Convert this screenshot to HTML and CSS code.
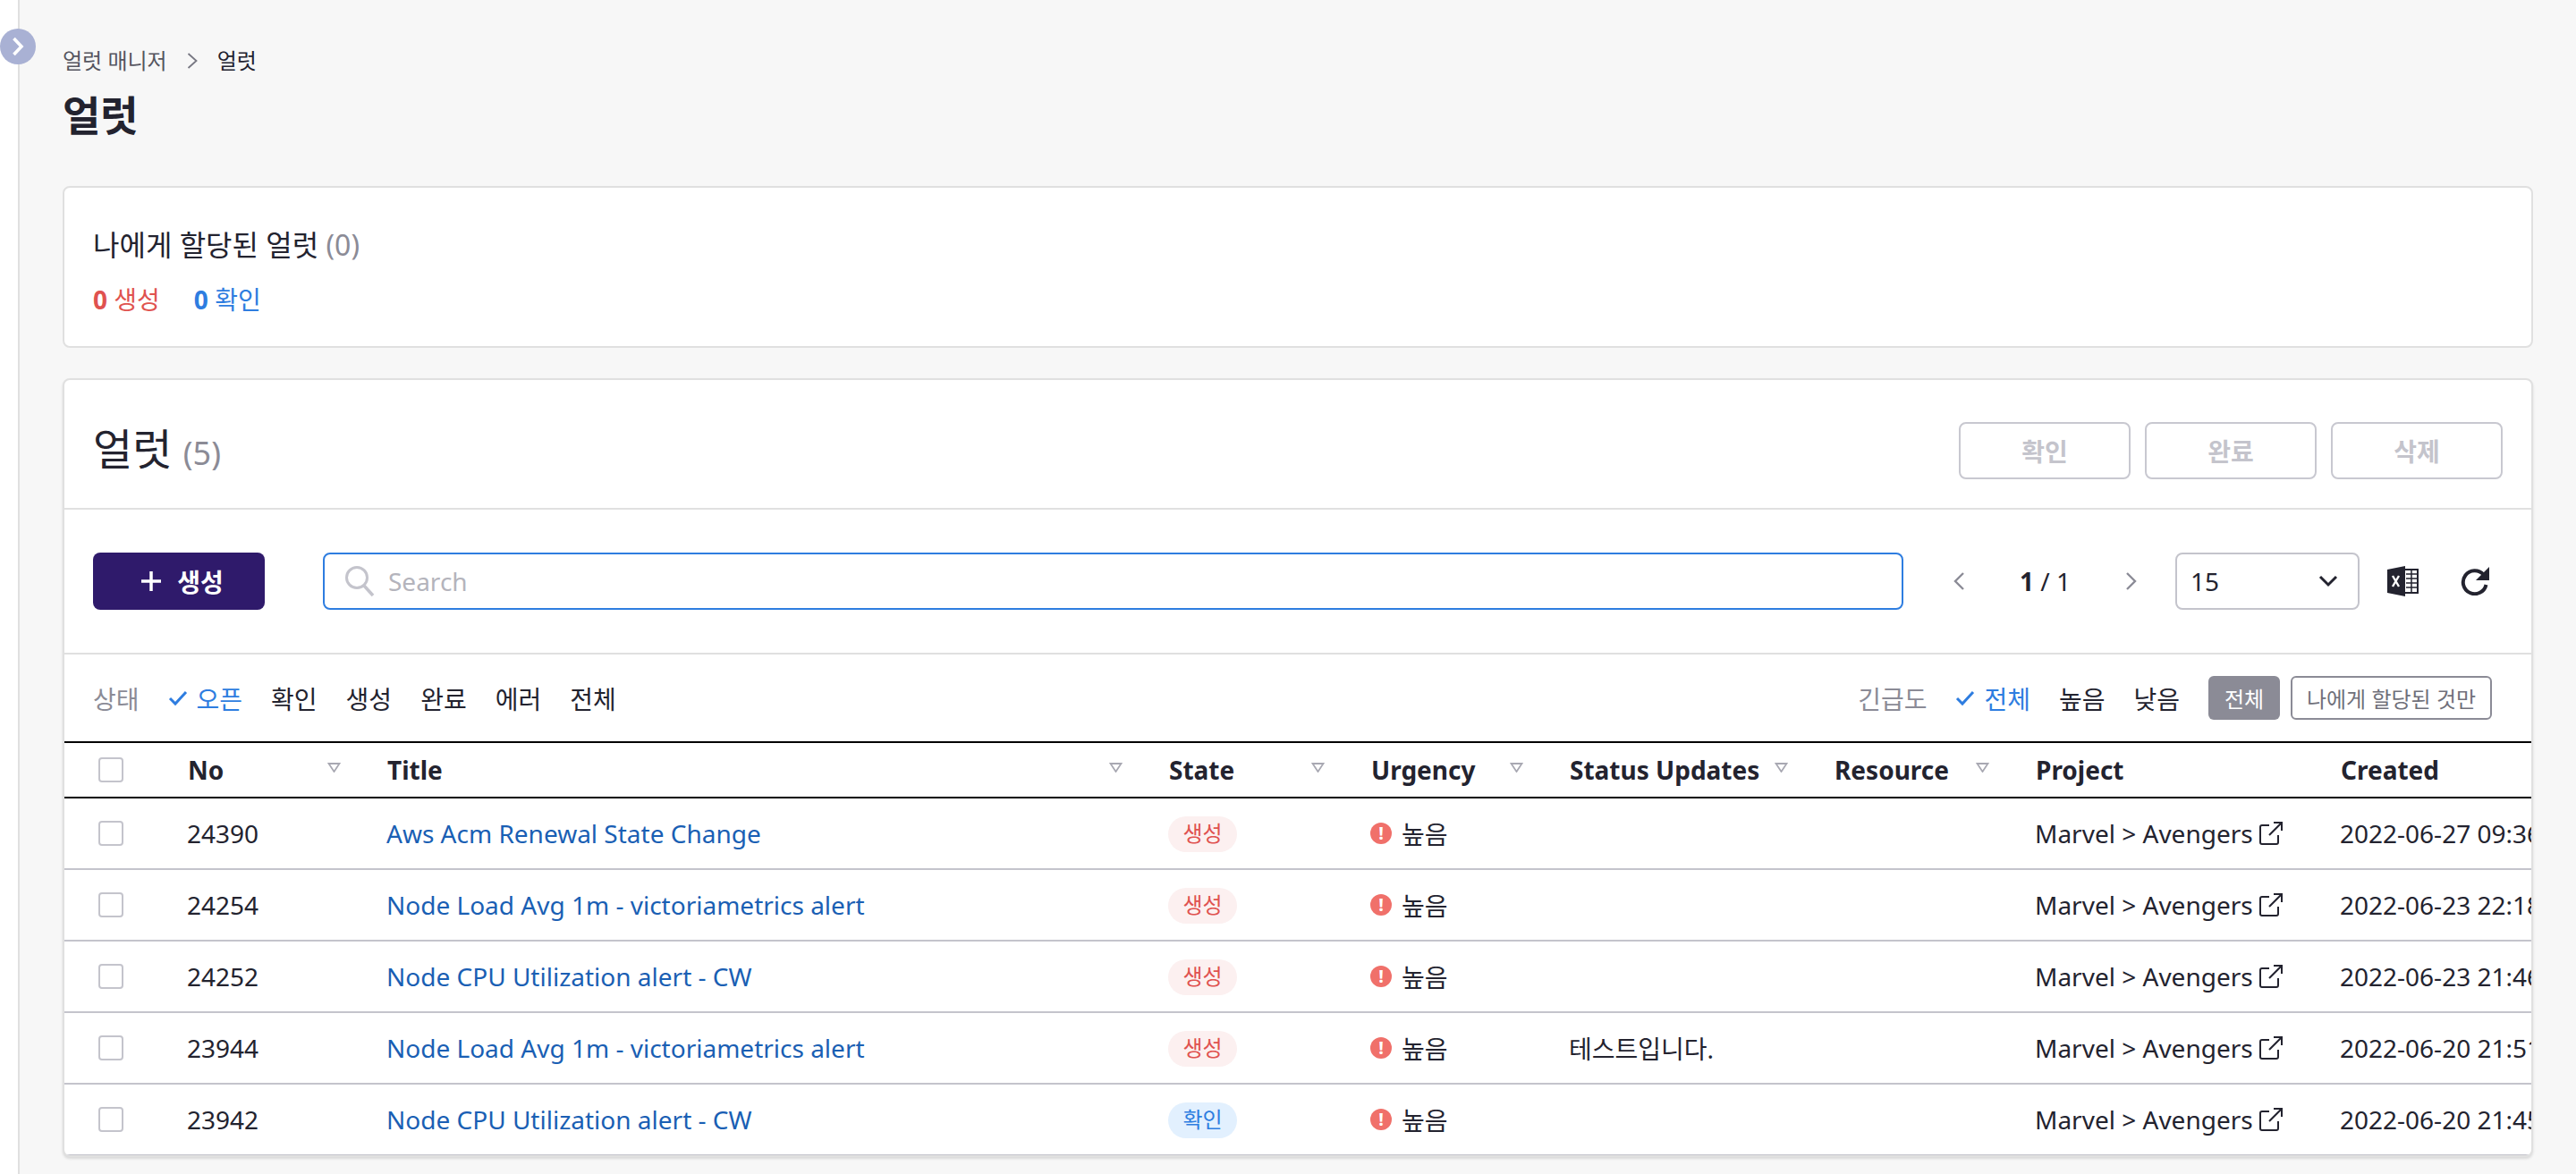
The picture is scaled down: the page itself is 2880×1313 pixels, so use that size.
FILE: index.html
```html
<!DOCTYPE html>
<html lang="ko">
<head>
    <meta charset="UTF-8">
    <title>얼럿</title>
    <link rel="stylesheet" href="styles.css">
</head>
<body>
    <div class="sidebar"></div>
    <button class="side-toggle">
        <svg width="16" height="22" viewBox="0 0 16 22"><path d="M3.5 2l8.5 9-8.5 9" fill="none" stroke="#fff" stroke-width="3.6"/></svg>
    </button>

    <div class="main">
        <div class="breadcrumb">
            <span>얼럿 매니저</span>
            <svg class="crumb-sep" width="12" height="18" viewBox="0 0 12 18"><path d="M1.5 1l9 8-9 8" fill="none" stroke="#777782" stroke-width="1.8"/></svg>
            <span class="crumb-current">얼럿</span>
        </div>
        <h1 class="page-title">얼럿</h1>

        <div class="card my-alerts">
            <div class="my-title">나에게 할당된 얼럿 <span class="count">(0)</span></div>
            <div class="my-counts">
                <span class="red"><b>0</b> 생성</span>
                <span class="blue"><b>0</b> 확인</span>
            </div>
        </div>

        <div class="card alert-list">
            <div class="list-head">
                <div class="list-title">얼럿 <span class="count">(5)</span></div>
                <div class="head-btns">
                    <button class="btn-off">확인</button>
                    <button class="btn-off">완료</button>
                    <button class="btn-off">삭제</button>
                </div>
            </div>

            <div class="toolbar">
                <button class="btn-create">
                    <svg width="26" height="26" viewBox="0 0 26 26"><path d="M13 2v22M2 13h22" stroke="#fff" stroke-width="3.5" fill="none"/></svg>
                    생성
                </button>
                <div class="search">
                    <svg width="34" height="36" viewBox="0 0 34 36"><circle cx="14" cy="14" r="11.5" fill="none" stroke="#c4c4cc" stroke-width="3"/><path d="M22 23l10 11" stroke="#c4c4cc" stroke-width="3.5" fill="none"/></svg>
                    <span class="placeholder">Search</span>
                </div>
                <div class="pager">
                    <svg width="14" height="22" viewBox="0 0 14 22"><path d="M12 2L3 11l9 9" fill="none" stroke="#8b8b96" stroke-width="2.4"/></svg>
                    <span class="page-num"><b>1</b> / 1</span>
                    <svg width="14" height="22" viewBox="0 0 14 22"><path d="M2 2l9 9-9 9" fill="none" stroke="#8b8b96" stroke-width="2.4"/></svg>
                </div>
                <div class="page-size">
                    <span>15</span>
                    <svg width="22" height="14" viewBox="0 0 22 14"><path d="M2 2l9 9 9-9" fill="none" stroke="#23232f" stroke-width="3"/></svg>
                </div>
                <svg class="excel" width="35" height="34" viewBox="0 0 35 34">
                    <path d="M0 4L20 0v34L0 30z" fill="#23232f"/>
                    <path d="M6 11l7 12M13 11L6 23" stroke="#fff" stroke-width="2.4" fill="none"/>
                    <path d="M20 4h14v26H20" fill="none" stroke="#23232f" stroke-width="2"/>
                    <path d="M27 4v26M21 9h13M21 14h13M21 19h13M21 24h13" stroke="#23232f" stroke-width="1.5" fill="none"/>
                </svg>
                <svg class="refresh" width="32" height="32" viewBox="0 0 32 32">
                    <path d="M25.5 8.5A13 13 0 1 0 28.5 20" fill="none" stroke="#23232f" stroke-width="4"/>
                    <path d="M32 0v15H17z" fill="#23232f"/>
                </svg>
            </div>

            <div class="filters">
                <div class="filter-group">
                    <span class="filter-label">상태</span>
                    <span class="filter on"><svg width="22" height="18" viewBox="0 0 22 18"><path d="M2 9l6 6L20 2" fill="none" stroke="#2e7de0" stroke-width="3"/></svg>오픈</span>
                    <span class="filter">확인</span>
                    <span class="filter">생성</span>
                    <span class="filter">완료</span>
                    <span class="filter">에러</span>
                    <span class="filter">전체</span>
                </div>
                <div class="filter-group">
                    <span class="filter-label">긴급도</span>
                    <span class="filter on"><svg width="22" height="18" viewBox="0 0 22 18"><path d="M2 9l6 6L20 2" fill="none" stroke="#2e7de0" stroke-width="3"/></svg>전체</span>
                    <span class="filter">높음</span>
                    <span class="filter">낮음</span>
                    <div class="assign-btns">
                        <button class="btn-all">전체</button>
                        <button class="btn-mine">나에게 할당된 것만</button>
                    </div>
                </div>
            </div>

            <div class="table-wrap">
                <table class="alert-table">
                    <colgroup>
                        <col class="c-check"><col class="c-no"><col class="c-title"><col class="c-state"><col class="c-urgency"><col class="c-status"><col class="c-resource"><col class="c-project"><col class="c-created">
                    </colgroup>
                    <thead>
                        <tr>
                            <th class="check-cell"><span class="checkbox"></span></th>
                            <th><div class="th-in">No<svg class="sort" width="15" height="11" viewBox="0 0 15 11"><path d="M1.5 1h12L7.5 10z" fill="none" stroke="#a8a8b2" stroke-width="1.8"/></svg></div></th>
                            <th><div class="th-in">Title<svg class="sort" width="15" height="11" viewBox="0 0 15 11"><path d="M1.5 1h12L7.5 10z" fill="none" stroke="#a8a8b2" stroke-width="1.8"/></svg></div></th>
                            <th><div class="th-in">State<svg class="sort" width="15" height="11" viewBox="0 0 15 11"><path d="M1.5 1h12L7.5 10z" fill="none" stroke="#a8a8b2" stroke-width="1.8"/></svg></div></th>
                            <th><div class="th-in">Urgency<svg class="sort" width="15" height="11" viewBox="0 0 15 11"><path d="M1.5 1h12L7.5 10z" fill="none" stroke="#a8a8b2" stroke-width="1.8"/></svg></div></th>
                            <th><div class="th-in">Status Updates<svg class="sort" width="15" height="11" viewBox="0 0 15 11"><path d="M1.5 1h12L7.5 10z" fill="none" stroke="#a8a8b2" stroke-width="1.8"/></svg></div></th>
                            <th><div class="th-in">Resource<svg class="sort" width="15" height="11" viewBox="0 0 15 11"><path d="M1.5 1h12L7.5 10z" fill="none" stroke="#a8a8b2" stroke-width="1.8"/></svg></div></th>
                            <th><div class="th-in">Project</div></th>
                            <th><div class="th-in">Created</div></th>
                        </tr>
                    </thead>
                    <tbody>
                        <tr>
                            <td class="check-cell"><span class="checkbox"></span></td>
                            <td>24390</td>
                            <td><a class="alert-link">Aws Acm Renewal State Change</a></td>
                            <td><span class="badge badge-new">생성</span></td>
                            <td><span class="urgency"><span class="urg-dot">!</span>높음</span></td>
                            <td></td>
                            <td></td>
                            <td><span class="project">Marvel &gt; Avengers<svg width="26" height="26" viewBox="0 0 26 26"><path d="M11 4H3a2 2 0 0 0-2 2v17a2 2 0 0 0 2 2h16a2 2 0 0 0 2-2v-8M11 15L25 1M16 1h9v9" fill="none" stroke="#23232f" stroke-width="2"/></svg></span></td>
                            <td>2022-06-27 09:36:12</td>
                        </tr>
                        <tr>
                            <td class="check-cell"><span class="checkbox"></span></td>
                            <td>24254</td>
                            <td><a class="alert-link">Node Load Avg 1m - victoriametrics alert</a></td>
                            <td><span class="badge badge-new">생성</span></td>
                            <td><span class="urgency"><span class="urg-dot">!</span>높음</span></td>
                            <td></td>
                            <td></td>
                            <td><span class="project">Marvel &gt; Avengers<svg width="26" height="26" viewBox="0 0 26 26"><path d="M11 4H3a2 2 0 0 0-2 2v17a2 2 0 0 0 2 2h16a2 2 0 0 0 2-2v-8M11 15L25 1M16 1h9v9" fill="none" stroke="#23232f" stroke-width="2"/></svg></span></td>
                            <td>2022-06-23 22:18:40</td>
                        </tr>
                        <tr>
                            <td class="check-cell"><span class="checkbox"></span></td>
                            <td>24252</td>
                            <td><a class="alert-link">Node CPU Utilization alert - CW</a></td>
                            <td><span class="badge badge-new">생성</span></td>
                            <td><span class="urgency"><span class="urg-dot">!</span>높음</span></td>
                            <td></td>
                            <td></td>
                            <td><span class="project">Marvel &gt; Avengers<svg width="26" height="26" viewBox="0 0 26 26"><path d="M11 4H3a2 2 0 0 0-2 2v17a2 2 0 0 0 2 2h16a2 2 0 0 0 2-2v-8M11 15L25 1M16 1h9v9" fill="none" stroke="#23232f" stroke-width="2"/></svg></span></td>
                            <td>2022-06-23 21:46:05</td>
                        </tr>
                        <tr>
                            <td class="check-cell"><span class="checkbox"></span></td>
                            <td>23944</td>
                            <td><a class="alert-link">Node Load Avg 1m - victoriametrics alert</a></td>
                            <td><span class="badge badge-new">생성</span></td>
                            <td><span class="urgency"><span class="urg-dot">!</span>높음</span></td>
                            <td>테스트입니다.</td>
                            <td></td>
                            <td><span class="project">Marvel &gt; Avengers<svg width="26" height="26" viewBox="0 0 26 26"><path d="M11 4H3a2 2 0 0 0-2 2v17a2 2 0 0 0 2 2h16a2 2 0 0 0 2-2v-8M11 15L25 1M16 1h9v9" fill="none" stroke="#23232f" stroke-width="2"/></svg></span></td>
                            <td>2022-06-20 21:51:33</td>
                        </tr>
                        <tr>
                            <td class="check-cell"><span class="checkbox"></span></td>
                            <td>23942</td>
                            <td><a class="alert-link">Node CPU Utilization alert - CW</a></td>
                            <td><span class="badge badge-ack">확인</span></td>
                            <td><span class="urgency"><span class="urg-dot">!</span>높음</span></td>
                            <td></td>
                            <td></td>
                            <td><span class="project">Marvel &gt; Avengers<svg width="26" height="26" viewBox="0 0 26 26"><path d="M11 4H3a2 2 0 0 0-2 2v17a2 2 0 0 0 2 2h16a2 2 0 0 0 2-2v-8M11 15L25 1M16 1h9v9" fill="none" stroke="#23232f" stroke-width="2"/></svg></span></td>
                            <td>2022-06-20 21:45:18</td>
                        </tr>
                    </tbody>
                </table>
            </div>
        </div>
    </div>
</body>
</html>
```

FILE: styles.css
```css
* {
    box-sizing: border-box;
}

html, body {
    height: 100%;
}

body {
    margin: 0;
    display: flex;
    height: 1313px;
    overflow: hidden;
    background: #f7f7f7;
    color: #23232f;
    font-family: "Noto Sans", "Noto Sans CJK KR", sans-serif;
    font-size: 28px;
}

button {
    font-family: inherit;
    cursor: pointer;
}

.sidebar {
    width: 22px;
    flex: none;
    background: #fff;
    border-right: 2px solid #e0e0e0;
}

.side-toggle {
    position: absolute;
    left: 0;
    top: 32px;
    width: 40px;
    height: 40px;
    padding: 0;
    border: none;
    border-radius: 50%;
    background: #a9b1d4;
    display: flex;
    align-items: center;
    justify-content: center;
}

.main {
    flex: 1;
    min-width: 0;
    padding: 50px 48px 0;
}

/* 상단 */
.breadcrumb {
    display: flex;
    align-items: center;
    height: 36px;
    font-size: 24px;
    line-height: 36px;
    color: #55555f;
}

.crumb-sep {
    margin: 0 22px;
}

.crumb-current {
    color: #23232f;
}

.page-title {
    margin: 10px 0 0;
    height: 64px;
    font-size: 46px;
    line-height: 64px;
    font-weight: 700;
}

.card {
    background: #fff;
    border: 2px solid #e0e0e0;
    border-radius: 8px;
}

.my-alerts {
    height: 181px;
    margin-top: 48px;
    padding: 41px 32px 0;
}

.my-title {
    height: 46px;
    font-size: 32px;
    line-height: 46px;
}

.count {
    color: #8b8b96;
}

.my-counts {
    display: flex;
    gap: 38px;
    margin-top: 20px;
    font-size: 28px;
    line-height: 36px;
}

.my-counts b {
    font-weight: 700;
}

.red {
    color: #e0524f;
}

.blue {
    color: #2e7de0;
}

/* 얼럿 목록 */
.alert-list {
    height: 871px;
    margin-top: 34px;
    overflow: hidden;
    box-shadow: 0 2px 3px rgba(0, 0, 0, 0.12);
}

.list-head {
    height: 145px;
    padding: 15px 32px 0;
    display: flex;
    align-items: center;
    justify-content: space-between;
    border-bottom: 2px solid #e0e0e0;
}

.list-title {
    font-size: 48px;
    line-height: 64px;
}

.list-title .count {
    font-size: 36px;
}

.head-btns {
    display: flex;
    gap: 16px;
}

.btn-off {
    width: 192px;
    height: 64px;
    background: #fff;
    border: 2px solid #c8c8d0;
    border-radius: 8px;
    color: #c4c4cc;
    font-size: 28px;
    font-weight: 700;
}

.toolbar {
    height: 162px;
    padding: 0 47px 0 32px;
    display: flex;
    align-items: center;
    border-bottom: 2px solid #e0e0e0;
}

.btn-create {
    width: 192px;
    height: 64px;
    flex: none;
    display: flex;
    align-items: center;
    justify-content: center;
    gap: 16px;
    padding: 0 0 0 6px;
    background: #2f1a6b;
    border: none;
    border-radius: 8px;
    color: #fff;
    font-size: 28px;
    font-weight: 700;
}

.search {
    flex: 1;
    height: 64px;
    margin-left: 65px;
    padding-left: 22px;
    display: flex;
    align-items: center;
    gap: 15px;
    border: 2px solid #2e7de0;
    border-radius: 8px;
}

.placeholder {
    color: #b4b4bc;
}

.pager {
    width: 207px;
    margin-left: 55px;
    flex: none;
    display: flex;
    align-items: center;
    justify-content: space-between;
}

.page-num b {
    font-weight: 700;
}

.page-size {
    width: 206px;
    height: 64px;
    flex: none;
    margin-left: 42px;
    padding: 0 22px 0 15px;
    display: flex;
    align-items: center;
    justify-content: space-between;
    border: 2px solid #c4c4cc;
    border-radius: 8px;
}

.excel {
    flex: none;
    margin-left: 31px;
}

.refresh {
    flex: none;
    margin-left: 47px;
}

.filters {
    height: 97px;
    padding: 0 44px 0 32px;
    display: flex;
    align-items: center;
    justify-content: space-between;
}

.filter-group {
    display: flex;
    align-items: center;
    gap: 32px;
}

.filter-label {
    color: #8b8b96;
}

.filter {
    display: flex;
    align-items: center;
    gap: 10px;
}

.filter.on {
    color: #2e7de0;
}

.assign-btns {
    display: flex;
    gap: 12px;
}

.assign-btns button {
    height: 49px;
    padding: 0;
    border-radius: 6px;
    font-size: 24px;
}

.btn-all {
    width: 80px;
    background: #8b8b96;
    border: none;
    color: #fff;
}

.btn-mine {
    width: 225px;
    background: #fff;
    border: 2px solid #8b8b96;
    color: #70707a;
}

/* 테이블 */
.table-wrap {
    overflow: hidden;
}

.alert-table {
    width: 2828px;
    table-layout: fixed;
    border-collapse: separate;
    border-spacing: 0;
}

.c-check { width: 121px; }
.c-no { width: 223px; }
.c-title { width: 874px; }
.c-state { width: 226px; }
.c-urgency { width: 222px; }
.c-status { width: 296px; }
.c-resource { width: 225px; }
.c-project { width: 341px; }
.c-created { width: 300px; }

th {
    height: 64px;
    padding: 0 35px 0 17px;
    border-top: 2px solid #000;
    border-bottom: 2px solid #000;
    text-align: left;
    font-weight: 700;
}

.th-in {
    display: flex;
    align-items: center;
    justify-content: space-between;
    white-space: nowrap;
}

.sort {
    flex: none;
    margin-bottom: 6px;
}

td {
    height: 80px;
    padding: 0 0 0 16px;
    border-bottom: 2px solid #c4c4cc;
    white-space: nowrap;
}

th.check-cell,
td.check-cell {
    padding: 0 0 0 38px;
}

.checkbox {
    display: block;
    width: 28px;
    height: 28px;
    border: 2px solid #c4c4cc;
    border-radius: 4px;
    background: #fff;
}

.alert-link {
    color: #1a5fb4;
}

.badge {
    display: inline-block;
    width: 77px;
    height: 40px;
    border-radius: 20px;
    text-align: center;
    font-size: 24px;
    line-height: 38px;
    vertical-align: middle;
}

.badge-new {
    background: #fcf0f0;
    color: #e0524f;
}

.badge-ack {
    background: #e2f0fe;
    color: #2e7de0;
}

.urgency {
    display: flex;
    align-items: center;
    gap: 11px;
}

.urg-dot {
    width: 24px;
    height: 24px;
    flex: none;
    border-radius: 50%;
    background: #f0706a;
    color: #fff;
    font-size: 20px;
    font-weight: 700;
    line-height: 24px;
    text-align: center;
}

.project {
    display: flex;
    align-items: center;
    gap: 7px;
}
```
